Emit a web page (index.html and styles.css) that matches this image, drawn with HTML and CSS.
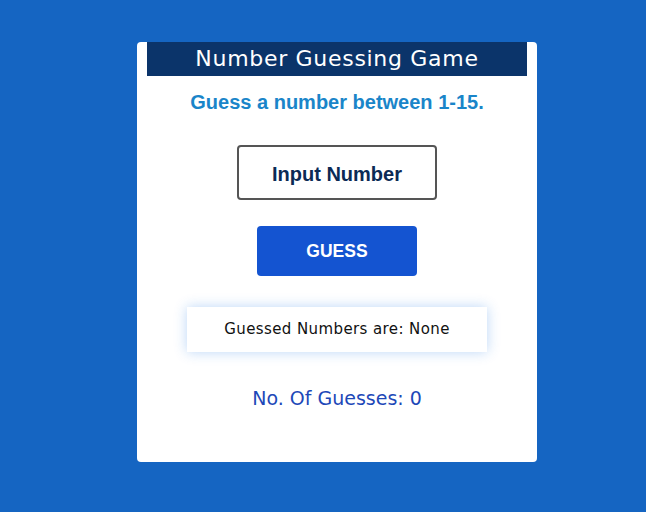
FILE: index.html
```html
<!DOCTYPE html>
<html>
<head>
<meta charset="utf-8">
<link rel="stylesheet" href="styles.css">
</head>
<body>
<div class="card">
  <h1 class="title">Number Guessing Game</h1>
  <h2 class="prompt">Guess a number between 1-15.</h2>
  <input class="num-input" type="text" placeholder="Input Number">
  <button class="guess-btn">GUESS</button>
  <div class="guessed">Guessed Numbers are: None</div>
  <div class="count">No. Of Guesses: 0</div>
</div>
</body>
</html>
```
FILE: styles.css
```css
html, body {
  margin: 0;
  padding: 0;
}
body {
  background: #1565c2;
  width: 646px;
  height: 512px;
  display: flex;
  justify-content: center;
  align-items: flex-start;
  padding: 42px 0 0 28px;
  box-sizing: border-box;
  font-family: "DejaVu Sans", sans-serif;
}
.card {
  width: 400px;
  height: 420px;
  background: #fff;
  border-radius: 4px;
  display: flex;
  flex-direction: column;
  align-items: center;
  box-sizing: border-box;
}
.title {
  margin: 0;
  width: 380px;
  height: 34px;
  background: #0b346a;
  color: #fff;
  font-weight: 400;
  font-size: 22px;
  letter-spacing: 0.7px;
  line-height: 34px;
  text-align: center;
}
.prompt {
  margin: 14px 0 0;
  font-family: "Liberation Sans", Arial, sans-serif;
  font-weight: 700;
  font-size: 20px;
  line-height: 24px;
  color: #1a85c9;
}
.num-input {
  margin-top: 31px;
  width: 200px;
  height: 55px;
  box-sizing: border-box;
  border: 2px solid #555;
  border-radius: 4px;
  padding: 4px 0 0;
  text-align: center;
  font-family: "Liberation Sans", Arial, sans-serif;
  font-weight: 700;
  font-size: 20px;
  color: #0b2a55;
  outline: none;
}
.num-input::placeholder {
  color: #0b2a55;
  opacity: 1;
}
.guess-btn {
  margin-top: 26px;
  width: 160px;
  height: 50px;
  border: none;
  border-radius: 4px;
  background: #1454d1;
  color: #fff;
  font-family: "Liberation Sans", Arial, sans-serif;
  font-weight: 700;
  font-size: 17.5px;
}
.guessed {
  margin-top: 31px;
  width: 300px;
  height: 45px;
  background: #fff;
  box-shadow: 0 0 12px rgba(30, 120, 230, 0.3);
  font-size: 15px;
  letter-spacing: 0.4px;
  line-height: 45px;
  text-align: center;
  color: #111;
}
.count {
  margin-top: 33px;
  font-size: 19px;
  line-height: 26px;
  color: #1d48b8;
}
```
